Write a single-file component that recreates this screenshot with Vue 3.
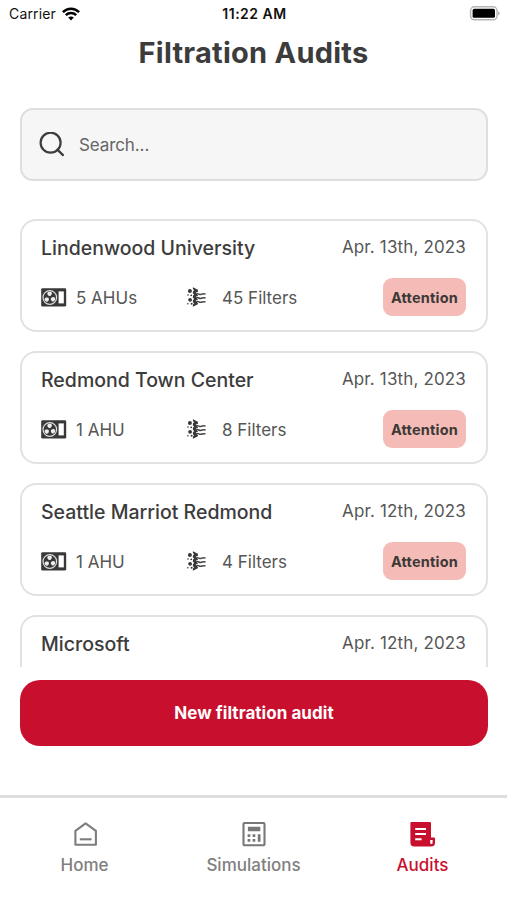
<script setup>
const audits = [
  { name: 'Lindenwood University', date: 'Apr. 13th, 2023', ahus: '5 AHUs', filters: '45 Filters' },
  { name: 'Redmond Town Center', date: 'Apr. 13th, 2023', ahus: '1 AHU', filters: '8 Filters' },
  { name: 'Seattle Marriot Redmond', date: 'Apr. 12th, 2023', ahus: '1 AHU', filters: '4 Filters' },
  { name: 'Microsoft', date: 'Apr. 12th, 2023' },
]
</script>

<template>
  <div class="screen">
    <header class="status">
      <div class="carrier">
        <span>Carrier</span>
        <svg width="18" height="14" viewBox="0 0 18 14" fill="none" stroke="#000" stroke-width="2.5">
          <path d="M.9 5.2C5.5.6 12.5.6 17.1 5.2" />
          <path d="M3.8 8.2c3-2.8 7.4-2.8 10.4 0" />
          <path d="M6.2 10.6c1.7-1.5 3.9-1.5 5.6 0L9 13.4z" fill="#000" stroke="none" />
        </svg>
      </div>
      <span class="time">11:22 AM</span>
      <svg class="battery" width="31" height="15" viewBox="0 0 31 15">
        <rect x="1.6" y=".8" width="26.4" height="13" rx="3.8" fill="#fff" stroke="#b5b5b5" stroke-width="1.4" />
        <rect x="3.6" y="2.8" width="22.4" height="9" rx="1.6" fill="#000" />
        <path d="M29.1 5.2c2.1.8 2.1 3.4 0 4.2z" fill="#aaa" />
      </svg>
    </header>

    <h1>Filtration Audits</h1>

    <label class="search">
      <svg width="26" height="26" viewBox="0 0 26 26" fill="none" stroke="#3c3c3c" stroke-width="2.2">
        <circle cx="11.6" cy="10.7" r="10" />
        <path d="M18.4 17.6l5.6 5.5" stroke-linecap="round" />
      </svg>
      <span>Search...</span>
    </label>

    <main class="list">
      <article v-for="audit in audits" :key="audit.name" class="card">
        <div class="top">
          <h2>{{ audit.name }}</h2>
          <time>{{ audit.date }}</time>
        </div>
        <div v-if="audit.ahus" class="details">
          <div class="ahu">
            <svg width="26" height="19" viewBox="0 0 26 19">
              <rect x=".2" y=".2" width="25" height="18.4" rx="1.4" fill="#383838" />
              <circle cx="8.8" cy="9.5" r="6.8" fill="#383838" stroke="#ddd" stroke-width="1.2" />
              <g fill="#eee">
                <path d="M8.2 8.1C5.5 6.7 5.8 4 8.5 3.8c2.9-.1 3.2 2.4.8 4.3z" />
                <path d="M8.2 8.1C5.5 6.7 5.8 4 8.5 3.8c2.9-.1 3.2 2.4.8 4.3z" transform="rotate(120 8.8 9.5)" />
                <path d="M8.2 8.1C5.5 6.7 5.8 4 8.5 3.8c2.9-.1 3.2 2.4.8 4.3z" transform="rotate(240 8.8 9.5)" />
              </g>
              <rect x="17.6" y="3.4" width="5.2" height="12" fill="#fff" />
            </svg>
            <span>{{ audit.ahus }}</span>
          </div>
          <div class="filter">
            <svg width="20" height="20" viewBox="0 0 20 20">
              <g fill="#383838">
                <circle cx="2.9" cy="4.1" r="2" />
                <circle cx="3.1" cy="12.8" r="1.9" />
                <circle cx="1" cy="8" r=".8" />
                <circle cx="4.2" cy="8.3" r=".9" />
                <circle cx=".9" cy="16.7" r=".8" />
                <circle cx="4.6" cy="16.7" r="1" />
                <path d="M5.9.2l5 2.6v14.4l-5 2.6v-2.2l1.2-1.2-1.2-1.2v-2l1.2-1.2-1.2-1.2v-2l1.2-1.2-1.2-1.2v-2l1.2-1.2-1.2-1.2z" />
              </g>
              <g fill="none" stroke="#fff" stroke-width="3">
                <path d="M9.6 6.8c2-1.2 3.2 1.1 5.2.5h3.9M9.6 10.7c2-1.2 3.2 1.1 5.2.5h3.9M9.6 14.6c2-1.2 3.2 1.1 5.2.5h3.9" />
              </g>
              <g fill="none" stroke="#444" stroke-width="1.5">
                <path d="M8.7 7.1c2.3-1.6 3.5 1 5.4.3 1.7-.7 2.7-.8 4.5-.3M8.7 11c2.3-1.6 3.5 1 5.4.3 1.7-.7 2.7-.8 4.5-.3M8.7 14.9c2.3-1.6 3.5 1 5.4.3 1.7-.7 2.7-.8 4.5-.3" />
              </g>
            </svg>
            <span>{{ audit.filters }}</span>
          </div>
          <strong class="badge">Attention</strong>
        </div>
      </article>
    </main>

    <button class="create">New filtration audit</button>

    <nav>
      <a class="tab">
        <svg width="26" height="26" viewBox="0 0 26 26" fill="none" stroke="#7d7d7d" stroke-width="2.1">
          <path d="M3.4 9.8L13.6 2.4 23.9 9.8v14H3.4z" stroke-linejoin="round" />
          <path d="M7.8 18.3h11.8" />
        </svg>
        <span>Home</span>
      </a>
      <a class="tab">
        <svg width="26" height="26" viewBox="0 0 26 26" fill="#777">
          <rect x="2.5" y="2" width="21" height="22.3" rx="1" fill="none" stroke="#777" stroke-width="2.1" />
          <path d="M6.9 5.8h12.4v4.5H6.9zM6.6 13.2h2.7v2.7H6.6zM11.6 13.2h2.7v2.7h-2.7zM6.6 18.1h2.7v2.7H6.6zM11.6 18.1h2.7v2.7h-2.7zM16.8 13.2h2.7v7.6h-2.7z" />
        </svg>
        <span>Simulations</span>
      </a>
      <a class="tab active">
        <svg width="26" height="26" viewBox="0 0 26 26">
          <path d="M1.6.9h18.2A1.2 1.2 0 0 1 21 2.1v14.5h3a1 1 0 0 1 1 1v4.1a3.8 3.8 0 0 1-3.8 3.8H4.1a3.7 3.7 0 0 1-3.7-3.7V2.1A1.2 1.2 0 0 1 1.6.9z" fill="#c8102e" />
          <path d="M5.2 8h10.8M5.2 13h10.8M5.2 18.2h6.4" stroke="#fff" stroke-width="2" />
          <path d="M20.2 19h2.4v2.7a1.2 1.2 0 0 1-2.4 0z" fill="#fff" />
        </svg>
        <span>Audits</span>
      </a>
    </nav>
  </div>
</template>

<style>
body {
  margin: 0;
  background: #fff;
}
</style>

<style scoped>
* {
  box-sizing: border-box;
}

.screen {
  display: flex;
  flex-direction: column;
  width: 507px;
  height: 900px;
  overflow: hidden;
  background: #fff;
  color: #3c3c3c;
  font-family: Inter, "Liberation Sans", sans-serif;
}

svg {
  display: block;
  flex: none;
}

.status {
  display: grid;
  grid-template-columns: 1fr auto 1fr;
  align-items: center;
  height: 27px;
  padding: 0 7px 0 9px;
  color: #111;
  font-size: 14px;
}

.carrier {
  display: flex;
  align-items: center;
  gap: 6px;
  letter-spacing: 0.15px;
}

.time {
  font-weight: 600;
  letter-spacing: 0.5px;
}

.battery {
  justify-self: end;
}

h1 {
  margin: 8px 0 0;
  text-align: center;
  font-size: 29px;
  font-weight: 700;
  line-height: 36px;
  letter-spacing: 0.25px;
}

.search {
  display: flex;
  align-items: center;
  gap: 14px;
  height: 73px;
  margin: 37px 19px 0 20px;
  padding: 0 19px 0 17px;
  border: 2px solid #dedede;
  border-radius: 13px;
  background: #f6f6f6;
  color: #656565;
  font-size: 17px;
  letter-spacing: -0.1px;
}

.list {
  display: flex;
  flex-direction: column;
  flex: none;
  gap: 19px;
  height: 448px;
  margin-top: 38px;
  padding: 0 19px 0 20px;
  overflow: hidden;
}

.card {
  flex: none;
  height: 113px;
  padding: 14px 20px 0 19px;
  border: 2px solid #e2e2e2;
  border-radius: 16px;
}

.top {
  display: flex;
  justify-content: space-between;
  height: 28px;
}

h2 {
  margin: 0;
  font-size: 19.5px;
  font-weight: 500;
  line-height: 27px;
}

time {
  color: #565656;
  font-size: 17px;
  line-height: 24px;
  letter-spacing: 0.15px;
}

.details {
  display: grid;
  grid-template-columns: 146px 1fr auto;
  align-items: center;
  height: 38px;
  margin-top: 15px;
  color: #565656;
  font-size: 17px;
}

.ahu,
.filter {
  display: flex;
  align-items: center;
  gap: 9px;
}

.ahu span,
.filter span {
  padding-top: 2px;
}

.filter {
  gap: 15px;
}

.badge {
  width: 83px;
  height: 38px;
  padding-top: 1px;
  border-radius: 9px;
  background: #f5bcb7;
  color: #3d3836;
  font-size: 14.5px;
  font-weight: 700;
  line-height: 38px;
  letter-spacing: 0.2px;
  text-align: center;
}

.create {
  flex: none;
  height: 66px;
  margin: 13px 19px 0 20px;
  padding: 0;
  border: 0;
  border-radius: 20px;
  background: #c8102e;
  color: #fff;
  font-family: inherit;
  font-size: 17px;
  font-weight: 700;
  letter-spacing: 0.05px;
}

nav {
  display: grid;
  grid-template-columns: repeat(3, 1fr);
  flex: 1;
  margin-top: 49px;
  padding-top: 23px;
  border-top: 3px solid #dedede;
}

.tab {
  display: flex;
  flex-direction: column;
  align-items: center;
  gap: 6px;
  color: #808080;
  font-size: 17px;
  font-weight: 500;
  line-height: 24px;
}

.active {
  color: #c8102e;
}
</style>
